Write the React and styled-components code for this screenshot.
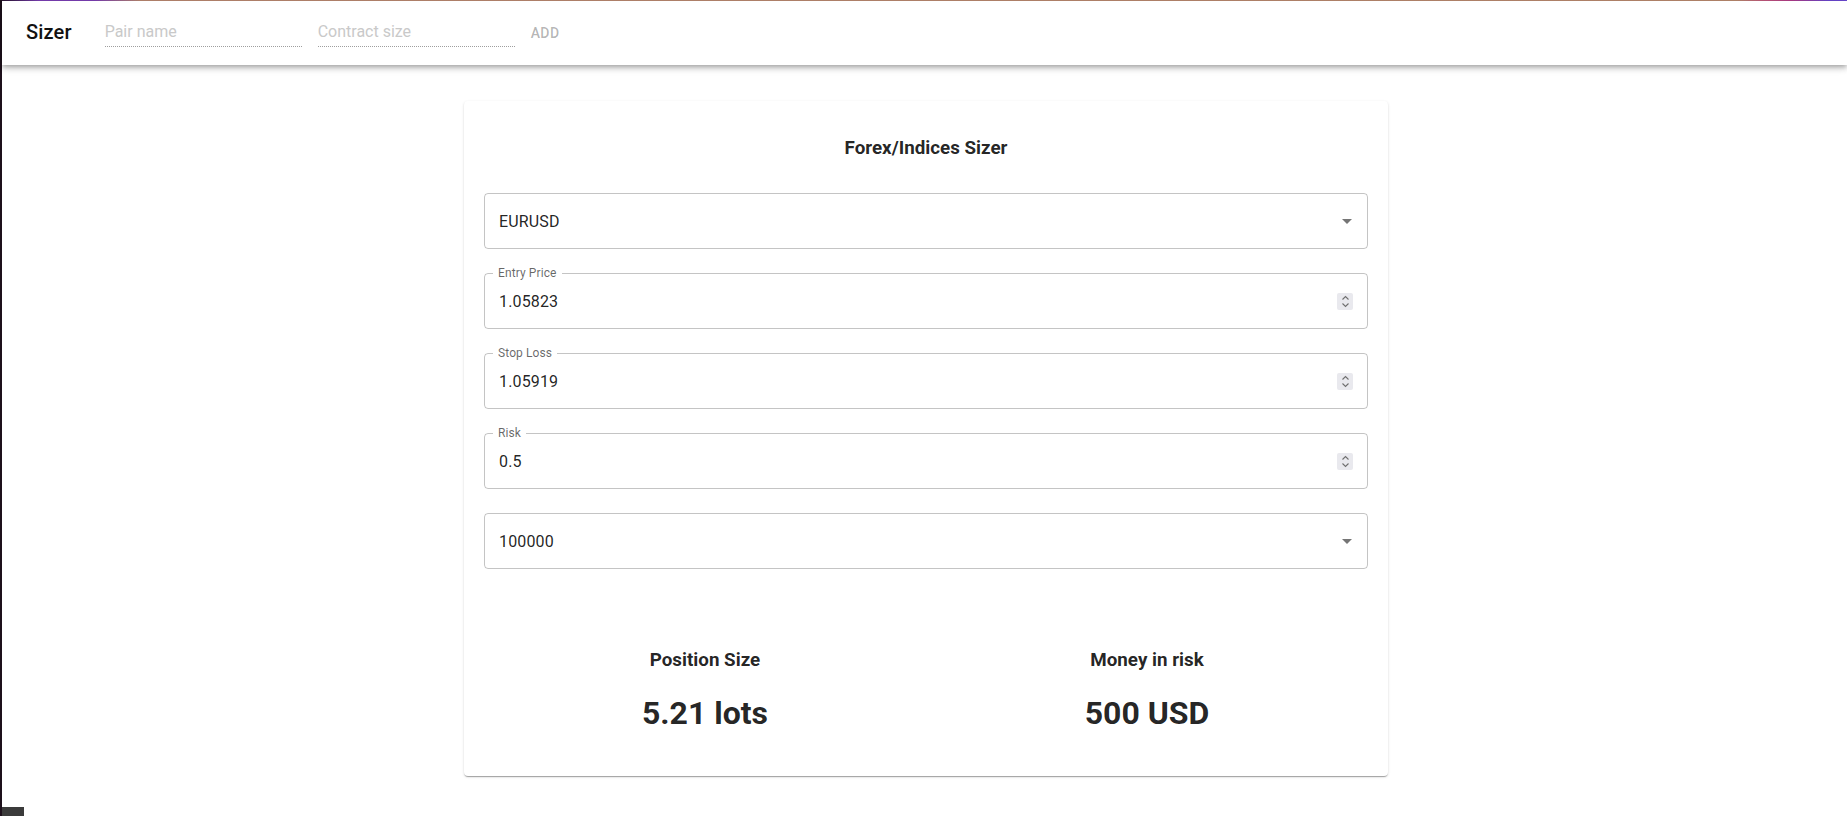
import React from 'react';
import styled, { createGlobalStyle } from 'styled-components';

const GlobalStyle = createGlobalStyle`
  html, body {
    margin: 0;
    padding: 0;
    background: #fff;
    font-family: Roboto, 'Liberation Sans', sans-serif;
  }
  * {
    box-sizing: border-box;
  }
`;

const fields = [
  { kind: 'select', value: 'EURUSD' },
  { kind: 'number', label: 'Entry Price', value: '1.05823' },
  { kind: 'number', label: 'Stop Loss', value: '1.05919' },
  { kind: 'number', label: 'Risk', value: '0.5' },
  { kind: 'select', value: '100000' },
];

const results = [
  { label: 'Position Size', value: '5.21 lots' },
  { label: 'Money in risk', value: '500 USD' },
];

const ArrowDown = () => (
  <ArrowIcon viewBox='0 0 24 24'>
    <path d='M7 10l5 5 5-5z' />
  </ArrowIcon>
);

const Spinner = () => (
  <SpinBox>
    <svg width='9' height='13' viewBox='0 0 9 13' fill='none' stroke='#6f6f6f' strokeWidth='1.1'>
      <path d='M1.5 4.5L4.5 1.5L7.5 4.5' />
      <path d='M1.5 8.5L4.5 11.5L7.5 8.5' />
    </svg>
  </SpinBox>
);

const App = () => {
  return (
    <Page>
      <GlobalStyle />
      <TopLine />
      <AppBar>
        <Brand>Sizer</Brand>
        <BarInput placeholder='Pair name' disabled />
        <BarInput placeholder='Contract size' disabled />
        <AddButton disabled>Add</AddButton>
      </AppBar>

      <Main>
        <Card>
          <Title>Forex/Indices Sizer</Title>
          <Fields>
            {fields.map((f, i) => (
              <Field key={i}>
                {f.label && <FieldLabel>{f.label}</FieldLabel>}
                <FieldValue>{f.value}</FieldValue>
                {f.kind === 'select' ? <ArrowDown /> : <Spinner />}
              </Field>
            ))}
          </Fields>
          <Results>
            {results.map((r) => (
              <Result key={r.label}>
                <ResultLabel>{r.label}</ResultLabel>
                <ResultValue>{r.value}</ResultValue>
              </Result>
            ))}
          </Results>
        </Card>
      </Main>
      <CornerBox />
    </Page>
  );
};

const Page = styled.div`
  position: relative;
  min-height: 100vh;
  border-left: 2px solid #1d101b;
  display: flex;
  flex-direction: column;
`;

const TopLine = styled.div`
  height: 1px;
  background: linear-gradient(
    to right,
    #2a1530 0%,
    #7b3fb5 2%,
    #7b3fb5 5%,
    #b98770 7.5%,
    #b98a6e 94%,
    #c2587c 95.5%,
    #b13c8a 97%,
    #6a48d0 99%
  );
`;

const AppBar = styled.header`
  position: relative;
  z-index: 1;
  height: 64px;
  display: flex;
  align-items: center;
  padding: 0 24px;
  background: #fff;
  box-shadow: 0px 2px 4px -1px rgba(0, 0, 0, 0.2), 0px 4px 5px 0px rgba(0, 0, 0, 0.14),
    0px 1px 10px 0px rgba(0, 0, 0, 0.12);
`;

const Brand = styled.h6`
  margin: 0 33px 2px 0;
  font-size: 20px;
  font-weight: 500;
  color: #111;
  letter-spacing: 0.15px;
`;

const BarInput = styled.input`
  width: 197px;
  margin: 0 16px 3px 0;
  padding: 4px 0 3px;
  border: none;
  border-bottom: 1px dotted rgba(0, 0, 0, 0.38);
  background: transparent;
  font-family: inherit;
  font-size: 16px;
  line-height: 23px;
  outline: none;

  &::placeholder {
    color: #c9c9c9;
    opacity: 1;
  }
`;

const AddButton = styled.button`
  margin: 0 0 1px -8px;
  padding: 6px 8px;
  border: none;
  background: transparent;
  font-family: inherit;
  font-size: 14px;
  font-weight: 500;
  letter-spacing: 0.4px;
  text-transform: uppercase;
  color: rgba(0, 0, 0, 0.3);
`;

const Main = styled.main`
  display: flex;
  justify-content: center;
  padding: 36px 0 0 3px;
`;

const Card = styled.section`
  width: 924px;
  padding: 20px 20px 43px;
  background: #fff;
  border-radius: 4px;
  box-shadow: 0px 2px 1px -1px rgba(0, 0, 0, 0.2), 0px 1px 1px 0px rgba(0, 0, 0, 0.14),
    0px 1px 3px 0px rgba(0, 0, 0, 0.12);
`;

const Title = styled.h2`
  margin: 13px 0 31px;
  text-align: center;
  font-size: 18.8px;
  line-height: 28px;
  font-weight: 700;
  color: rgba(0, 0, 0, 0.87);
`;

const Fields = styled.div`
  display: flex;
  flex-direction: column;
  gap: 24px;
`;

const Field = styled.div`
  position: relative;
  height: 56px;
  display: flex;
  align-items: center;
  padding: 0 14px;
  border: 1px solid rgba(0, 0, 0, 0.23);
  border-radius: 4px;
`;

const FieldLabel = styled.span`
  position: absolute;
  top: -9px;
  left: 8px;
  padding: 0 5px;
  background: #fff;
  font-size: 12px;
  line-height: 16px;
  color: rgba(0, 0, 0, 0.6);
  letter-spacing: 0.1px;
`;

const FieldValue = styled.span`
  flex: 1;
  font-size: 16px;
  line-height: 23px;
  color: rgba(0, 0, 0, 0.87);
  letter-spacing: 0.15px;
`;

const ArrowIcon = styled.svg`
  width: 24px;
  height: 24px;
  margin-right: -6px;
  fill: rgba(0, 0, 0, 0.54);
`;

const SpinBox = styled.span`
  width: 16px;
  height: 17px;
  display: flex;
  align-items: center;
  justify-content: center;
  background: #e9e9ee;
  border-radius: 2px;
`;

const Results = styled.div`
  display: grid;
  grid-template-columns: 1fr 1fr;
  margin-top: 79px;
`;

const Result = styled.div`
  display: flex;
  flex-direction: column;
  align-items: center;
`;

const ResultLabel = styled.h3`
  margin: 0 0 21px;
  font-size: 18.8px;
  line-height: 24px;
  font-weight: 700;
  color: rgba(0, 0, 0, 0.87);
`;

const ResultValue = styled.div`
  font-size: 32px;
  line-height: 40px;
  font-weight: 700;
  color: rgba(0, 0, 0, 0.87);
`;

const CornerBox = styled.div`
  position: absolute;
  left: 0;
  bottom: 0;
  width: 22px;
  height: 9px;
  background: #3b3b3b;
`;

export default App;
